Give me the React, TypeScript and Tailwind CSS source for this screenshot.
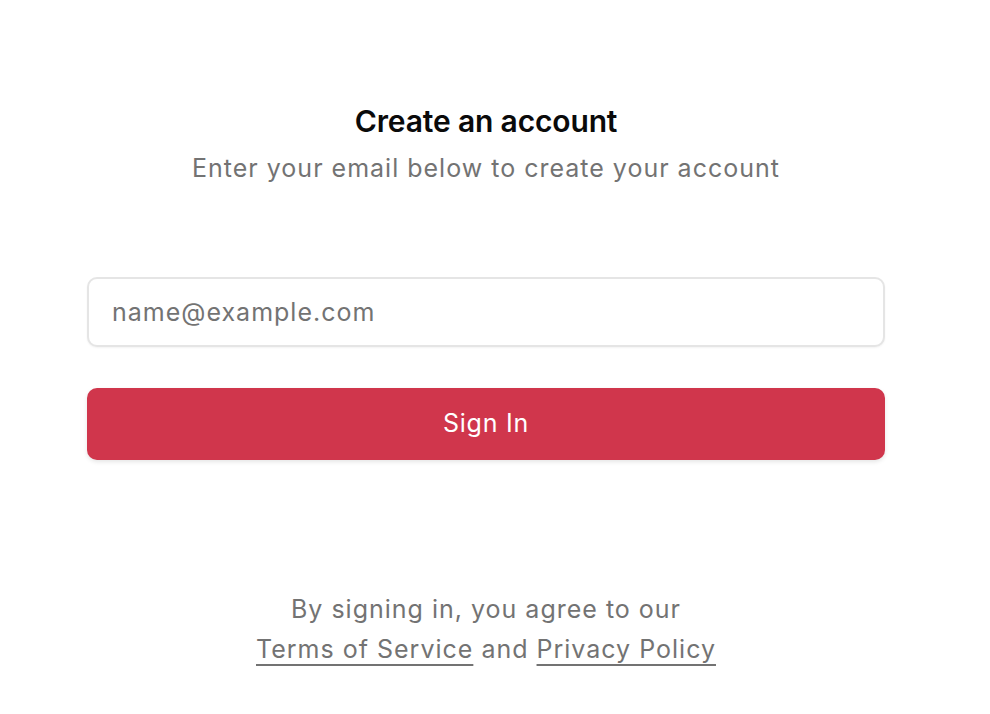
export default function App() {
  return (
    <div className="min-h-screen bg-white font-['Inter',sans-serif]">
      <div className="mx-auto w-[798px] -translate-x-[9px] pt-[100px]">
        {/* Heading */}
        <div className="flex flex-col items-center text-center">
          <h1 className="text-[30px] leading-[42px] font-semibold tracking-[-0.005em] text-[#0a0a0a]">
            Create an account
          </h1>
          <p className="mt-[8px] text-[25px] leading-[36px] tracking-[0.04em] text-[#737373]">
            Enter your email below to create your account
          </p>
        </div>

        {/* Form */}
        <div className="mt-[91px] flex flex-col gap-[41px]">
          <input
            type="email"
            placeholder="name@example.com"
            className="h-[70px] w-full rounded-[10px] border-2 border-[#e5e5e5] bg-white px-[23px] text-[25px] tracking-[0.04em] text-[#0a0a0a] shadow-[0_1px_2px_rgba(0,0,0,0.05)] outline-none placeholder:text-[#737373]"
          />
          <button className="h-[72px] w-full rounded-[10px] bg-[#d0364c] text-[25px] tracking-[0.03em] text-white shadow-[0_2px_4px_rgba(0,0,0,0.1)]">
            Sign In
          </button>
        </div>

        {/* Terms */}
        <p className="mt-[129px] text-center text-[25px] leading-[40px] tracking-[0.04em] text-[#737373]">
          By signing in, you agree to our
          <br />
          <a href="#" className="underline underline-offset-[6px] decoration-[1.5px]">
            Terms of Service
          </a>{' '}
          and{' '}
          <a href="#" className="underline underline-offset-[6px] decoration-[1.5px]">
            Privacy Policy
          </a>
        </p>
      </div>
    </div>
  )
}
